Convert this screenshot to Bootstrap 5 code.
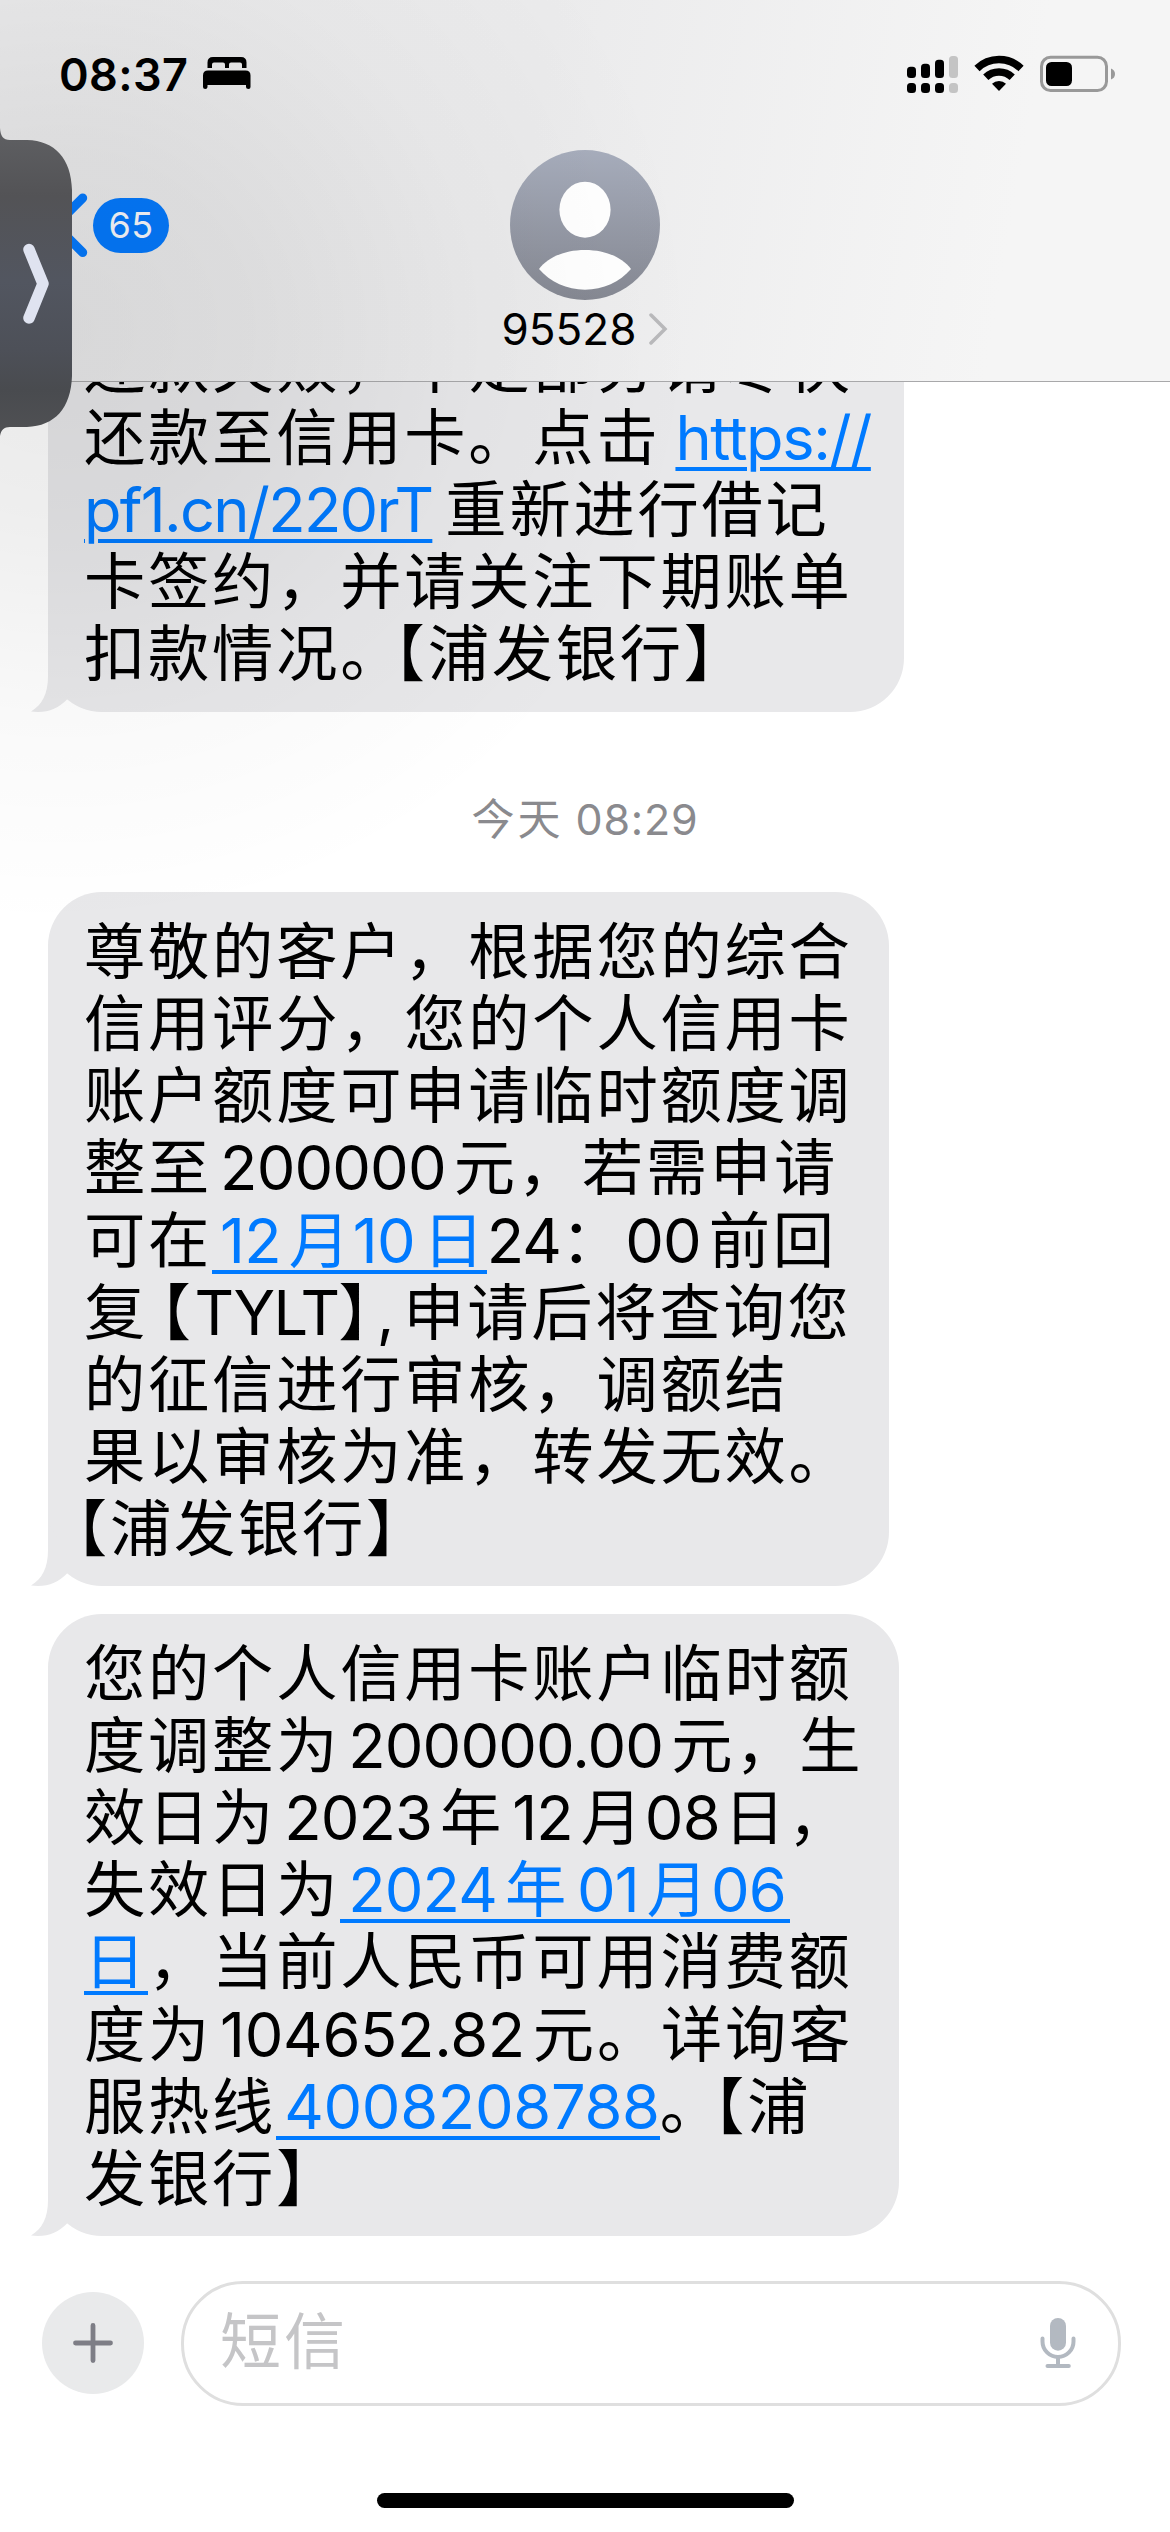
<!DOCTYPE html>
<html lang="zh-CN">
<head>
<meta charset="utf-8">
<meta name="viewport" content="width=device-width, initial-scale=1">
<title>95528</title>
<link href="https://cdn.jsdelivr.net/npm/bootstrap@5.3.0/dist/css/bootstrap.min.css" rel="stylesheet">
<style>
html,body{height:2532px}
body{font-family:Inter,"Noto Sans CJK SC",sans-serif;color:#000;background:#fff}
.phone{width:1170px;height:2532px}
.phone svg{display:block;flex:none}

/* header */
.top-bar{height:382px;border-bottom:1px solid #a8a8aa;background:linear-gradient(100deg,#ececed 0,#ebebec 45%,#f5f5f5 85%);z-index:1}
.status{height:150px;padding:0 54px 2px 59px}
.status-left{gap:15px}
.clock{font-size:45px;font-weight:600;letter-spacing:.4px;line-height:1}
.unread{width:76px;height:55px;font-size:36px;letter-spacing:.5px;color:#fafbff;background:#047aff}
.side{width:510px}
.back-link{padding-left:51px;gap:5px;height:150px}
.contact{width:150px}
.peer{font-size:44px;line-height:54px;margin-top:2px;gap:13px}

/* dark tab docked at the left edge, and the shade it throws */
.shade{left:0;top:0;width:1170px;height:960px;pointer-events:none;z-index:2;background:radial-gradient(ellipse 640px 600px at 60px 330px,rgba(0,0,0,.085) 0,rgba(0,0,0,.065) 30%,rgba(0,0,0,.025) 65%,transparent 100%)}
.dock-tab{left:0;top:126px;z-index:3}

/* thread */
.thread{padding-left:48px}
.bubble{position:relative;background:#e8e8ea;border-radius:54px;padding:24px 0 21.2px 36px;font-size:61.3px;line-height:72.17px;letter-spacing:2.75px;white-space:nowrap}
.b-one{width:856px;margin-top:-76.4px}
.b-two{width:841px}
.b-three{width:851px;margin-top:27.3px}
.ln{height:72.17px}
.tail{position:absolute;left:-17px;bottom:0}
.bubble a{color:#007aff;text-decoration:none}
.bubble a.data-link{background:linear-gradient(#007aff,#007aff) 0 calc(100% - 4px)/100% 4px no-repeat}
.bubble a.url{text-decoration:underline;text-decoration-thickness:4px;text-underline-offset:7px}
.url-a{letter-spacing:-1.4px;margin-left:15px}
.url-b{letter-spacing:-1.7px;margin-right:13px}
.num{letter-spacing:-.85px}
.num-wide{letter-spacing:-.3px}
.gl{padding-left:8px}
.gr{padding-right:8px}
.gr-s{padding-right:4px}
.half{font-feature-settings:"halt"}
.pull{margin-right:-10px}
.hang{margin-left:-7.5px}
.code-open{margin-left:12px}
.code{letter-spacing:-1.7px;margin-left:1px}
.comma{margin:0 6px 0 5px}
.stamp{font-size:43px;line-height:60px;letter-spacing:3px;color:#8a8a8e;margin:77px 48px 43.3px 0}
.stamp .hm{letter-spacing:.8px;margin-left:12px}

/* composer */
.composer{height:125px;margin-top:44.5px;padding:0 49px 0 42px;gap:37px}
.plus-btn{width:102px;height:102px;background:#e9eaeb}
.field{height:125px;border:3px solid #dfdfdf;border-radius:62px;padding:0 42px 0 36px;font-size:61px;letter-spacing:3px;color:#c5c5c7}
.home-bar{width:417px;height:15px;background:#000;margin-top:87px}
</style>
</head>
<body>
<div class="phone position-relative overflow-hidden d-flex flex-column">
  <header class="top-bar position-relative flex-shrink-0">
    <div class="status d-flex align-items-center justify-content-between">
      <div class="status-left d-flex align-items-center">
        <span class="clock">08:37</span>
        <svg width="48" height="34" viewBox="0 0 48 34"><path d="M4.500 11V5.500Q4.500 0 10 0H38Q43.500 0 43.500 5.500V11H39V7.500Q39 5.500 37 5.500H28Q26 5.500 26 7.500V11H22V7.500Q22 5.500 20 5.500H11Q9 5.500 9 7.500V11Z"/><path d="M0 18.500Q0 13.500 5 13.500H42.500Q47.500 13.500 47.500 18.500V30Q47.500 32 45.500 32Q43 32 43 30V28H4.500V30Q4.500 32 2.300 32Q0 32 0 30Z"/></svg>
      </div>
      <svg width="209" height="40" viewBox="907 54 209 40">
        <g><rect x="907" y="66.700" width="9" height="11.300" rx="3.500"/><rect x="921" y="63.700" width="9" height="14.300" rx="3.500"/><rect x="935" y="59.700" width="9" height="18.300" rx="3.500"/><rect x="907" y="83" width="9" height="10" rx="3.500"/><rect x="921" y="83" width="9" height="10" rx="3.500"/><rect x="935" y="83" width="9" height="10" rx="3.500"/></g>
        <g fill="#c4c4c4"><rect x="949" y="56" width="9" height="22" rx="3.500"/><rect x="949" y="83" width="9" height="10" rx="3.500"/></g>
        <g fill="none" stroke="#000" stroke-width="7.500"><path d="M977 68.500A31.500 31.500 0 0 1 1021 68.500"/><path d="M985.800 77.300A19 19 0 0 1 1012.200 77.300"/></g>
        <path d="M999 91L992 83.800A10 10 0 0 1 1006 83.800Z"/>
        <rect x="1041.500" y="57.200" width="65" height="33.300" rx="9" fill="none" stroke="#999" stroke-width="3"/>
        <rect x="1046" y="62" width="26" height="24" rx="5.500"/>
        <path d="M1111 68.500Q1115 70 1115 74T1111 79.500Z" fill="#999"/>
      </svg>
    </div>
    <div class="d-flex">
      <div class="side back-link d-flex align-items-center">
        <svg width="37" height="64" viewBox="0 0 37 64"><path d="M31.700 5L4.500 32.200L31.700 59.500" fill="none" stroke="#047aff" stroke-width="9" stroke-linecap="round" stroke-linejoin="round"/></svg>
        <span class="unread rounded-pill d-flex align-items-center justify-content-center">65</span>
      </div>
      <div class="contact d-flex flex-column align-items-center">
        <svg width="150" height="150" viewBox="0 0 150 150"><defs><linearGradient id="av" x2="0" y2="1"><stop stop-color="#a7adbc"/><stop offset="1" stop-color="#858892"/></linearGradient></defs><circle cx="75" cy="75" r="75" fill="url(#av)"/><ellipse cx="75" cy="59.700" rx="25.600" ry="28" fill="#fff"/><path d="M29 119C38 107 55 100 75 100S112 107 121 119C110 132 93 139.700 75 139.700S40 132 29 119Z" fill="#fff"/></svg>
        <div class="peer d-flex align-items-center text-nowrap">95528<svg width="19" height="32" viewBox="0 0 19 32"><path d="M2 2L16 16L2 30" fill="none" stroke="#b9b9bb" stroke-width="3.500" stroke-linecap="round"/></svg></div>
      </div>
    </div>
  </header>

  <main class="thread flex-shrink-0">
    <div class="bubble b-one">
      <div class="ln">还款失败，不足部分请尽快</div>
      <div class="ln">还款至信用卡。点击<a href="#" class="url url-a">https://</a></div>
      <div class="ln"><a href="#" class="url url-b">pf1.cn/220rT</a>重新进行借记</div>
      <div class="ln">卡签约，并请关注下期账单</div>
      <div class="ln">扣款情况<span class="pull">。</span><span class="half">【</span>浦发银行】</div>
      <svg class="tail" width="40" height="64" viewBox="0 0 40 64"><path d="M17 0V28C17 46 11 57 0 63.500C15 65.500 27 61 36 51.500L40 40Z" fill="#e8e8ea"/></svg>
    </div>
    <div class="stamp text-center">今天<span class="hm">08:29</span></div>
    <div class="bubble b-two">
      <div class="ln">尊敬的客户，根据您的综合</div>
      <div class="ln">信用评分，您的个人信用卡</div>
      <div class="ln">账户额度可申请临时额度调</div>
      <div class="ln">整至<span class="num gl gr">200000</span>元，若需申请</div>
      <div class="ln">可在<a href="#" class="data-link"><span class="num gl gr">12</span>月<span class="num gr">10</span>日</a><span class="num">24</span>：<span class="num gr">00</span>前回</div>
      <div class="ln">复<span class="half code-open">【</span><span class="code">TYLT</span><span class="half">】</span><span class="comma">,</span>申请后将查询您</div>
      <div class="ln">的征信进行审核，调额结</div>
      <div class="ln">果以审核为准，转发无效。</div>
      <div class="ln"><span class="half hang">【</span>浦发银行】</div>
      <svg class="tail" width="40" height="64" viewBox="0 0 40 64"><path d="M17 0V28C17 46 11 57 0 63.500C15 65.500 27 61 36 51.500L40 40Z" fill="#e8e8ea"/></svg>
    </div>
    <div class="bubble b-three">
      <div class="ln">您的个人信用卡账户临时额</div>
      <div class="ln">度调整为<span class="num gl gr">200000.00</span>元，生</div>
      <div class="ln">效日为<span class="num gl gr">2023</span>年<span class="num gl gr">12</span>月<span class="num gr-s">08</span>日，</div>
      <div class="ln">失效日为<a href="#" class="data-link"><span class="num gl gr">2024</span>年<span class="num gl gr">01</span>月<span class="num gr-s">06</span></a></div>
      <div class="ln"><a href="#" class="data-link">日</a>，当前人民币可用消费额</div>
      <div class="ln">度为<span class="num num-wide gl gr">104652.82</span>元。详询客</div>
      <div class="ln">服热线<a href="#" class="data-link"><span class="num num-wide gl">4008208788</span></a><span class="pull">。</span><span class="half">【</span>浦</div>
      <div class="ln">发银行】</div>
      <svg class="tail" width="40" height="64" viewBox="0 0 40 64"><path d="M17 0V28C17 46 11 57 0 63.500C15 65.500 27 61 36 51.500L40 40Z" fill="#e8e8ea"/></svg>
    </div>
  </main>

  <footer class="flex-shrink-0">
    <div class="composer d-flex align-items-center">
      <button type="button" class="plus-btn btn p-0 border-0 rounded-circle d-flex align-items-center justify-content-center flex-shrink-0"><svg width="40" height="40" viewBox="0 0 40 40"><path d="M20 2.500V37.500M2.500 20H37.500" stroke="#7e7e86" stroke-width="4.800" stroke-linecap="round"/></svg></button>
      <div class="field flex-grow-1 d-flex align-items-center justify-content-between"><span>短信</span>
        <svg width="36" height="52" viewBox="0 0 36 52"><g fill="#b3b9c1"><rect x="10" y="1" width="16" height="32.700" rx="8"/><rect x="5.500" y="47" width="25.300" height="4" rx="2"/></g><path d="M2.500 21.500V24.500A15.500 15.500 0 0 0 33.500 24.500V21.500M18 40V48" fill="none" stroke="#b3b9c1" stroke-width="4" stroke-linecap="round"/></svg>
      </div>
    </div>
    <div class="home-bar rounded-pill mx-auto"></div>
  </footer>

  <div class="shade position-absolute"></div>
  <svg class="dock-tab position-absolute" width="72" height="314" viewBox="0 126 72 314"><defs><linearGradient id="dk" x2="0" y2="1"><stop stop-color="#5f6063"/><stop offset=".22" stop-color="#535356"/><stop offset=".5" stop-color="#525660"/><stop offset=".72" stop-color="#4d5058"/><stop offset=".85" stop-color="#494b4f"/><stop offset="1" stop-color="#505154"/></linearGradient></defs><path d="M0 128C.5 136 3 140 10 140H27C55 141 71 158 72 190V376C71 408 55 426 27 427H10C4 427 1 430 0 436Z" fill="url(#dk)"/><path d="M29 249.500L43 283.700L29 318" fill="none" stroke="#dfe3f0" stroke-width="11.500" stroke-linecap="round" stroke-linejoin="round"/></svg>
</div>
<script src="https://cdn.jsdelivr.net/npm/bootstrap@5.3.0/dist/js/bootstrap.bundle.min.js"></script>
</body>
</html>
